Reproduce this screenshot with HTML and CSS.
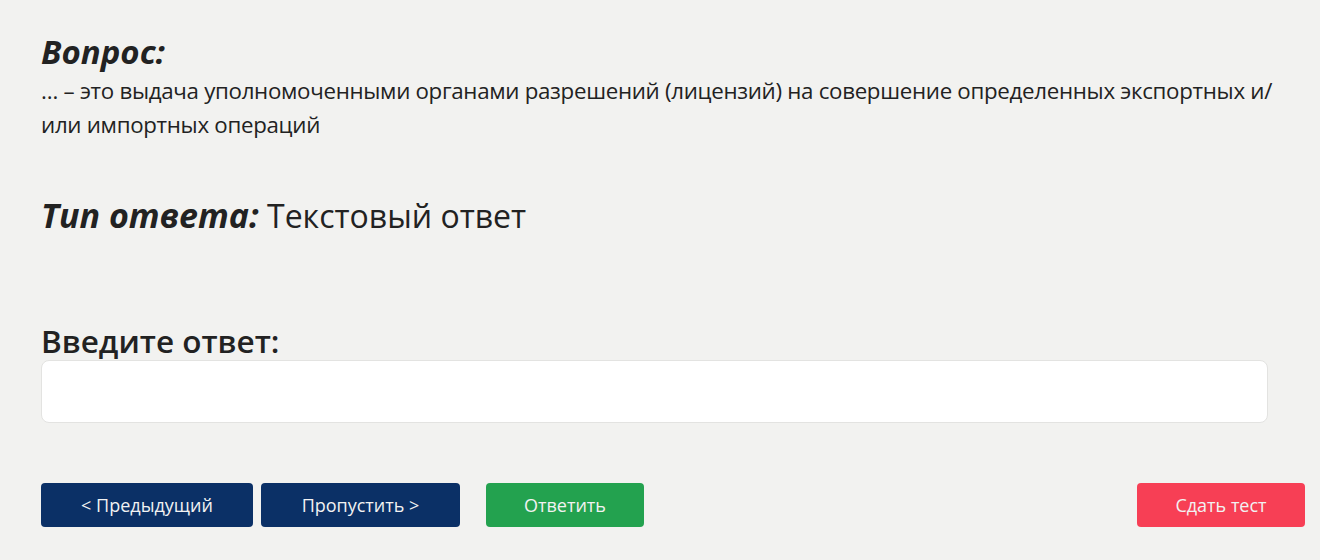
FILE: index.html
```html
<!DOCTYPE html>
<html lang="ru">

<head>
    <meta charset="UTF-8">
    <meta name="viewport" content="width=device-width, initial-scale=1.0">
    <title>Тест</title>
    <link rel="stylesheet" href="styles.css">
</head>

<body>
    <div class="container">
        <div class="question">
            <h2 class="title">Вопрос:</h2>
            <p class="question-text">… – это выдача уполномоченными органами разрешений (лицензий) на совершение определенных экспортных и/ или импортных операций</p>
        </div>

        <div class="answer-type">
            <span class="title">Тип ответа:</span> Текстовый ответ
        </div>

        <div class="answer">
            <label for="answer" class="answer-label">Введите ответ:</label>
            <input type="text" id="answer" class="answer-input">
        </div>

        <div class="controls">
            <button type="button" class="btn btn-nav">&lt; Предыдущий</button>
            <button type="button" class="btn btn-nav btn-skip">Пропустить &gt;</button>
            <button type="button" class="btn btn-answer">Ответить</button>
            <button type="button" class="btn btn-finish">Сдать тест</button>
        </div>
    </div>
</body>

</html>
```

FILE: styles.css
```css
* {
  margin: 0;
  padding: 0;
  box-sizing: border-box;
  font-family: "Open Sans", "Noto Sans", Arial, sans-serif;
}

body {
  background-color: #f2f2f0;
  color: #222;
}

.container {
  padding: 30px 15px 0 41px;
}

.question .title {
  font-size: 33px;
  font-weight: 700;
  font-style: italic;
  line-height: 44px;
}

.question-text {
  font-size: 22.3px;
  line-height: 34px;
  letter-spacing: -0.3px;
}

.answer-type {
  margin-top: 51px;
  font-size: 32px;
  line-height: 44px;
}

.answer-type .title {
  font-size: 34px;
  font-weight: 700;
  font-style: italic;
}

.answer {
  margin-top: 83px;
  margin-right: 37px;
}

.answer-label {
  display: block;
  font-size: 31.5px;
  font-weight: 600;
  line-height: 39px;
}

.answer-input {
  display: block;
  width: 100%;
  height: 63px;
  border: 1px solid #e3e3e1;
  border-radius: 8px;
  background: #fff;
  padding: 0 14px;
  font-size: 20px;
}

.controls {
  display: flex;
  margin-top: 60px;
}

.btn {
  height: 44px;
  border: none;
  border-radius: 4px;
  color: #f2f2f2;
  font-size: 18px;
  cursor: pointer;
}

.btn-nav {
  background-color: #0b3066;
  width: 212px;
}

.btn-skip {
  width: 199px;
  margin-left: 8px;
}

.btn-answer {
  background-color: #23a24f;
  width: 158px;
  margin-left: 26px;
}

.btn-finish {
  background-color: #f73f55;
  width: 168px;
  margin-left: auto;
}
```
